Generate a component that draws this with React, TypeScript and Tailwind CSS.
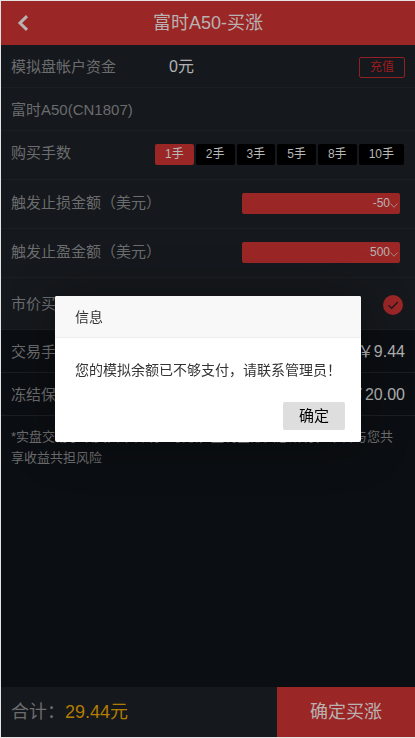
import { useState, type ReactNode } from 'react'

const LOTS = [1, 2, 3, 5, 8, 10]

function Row({ className = 'h-[43px] pt-0.5', children }: { className?: string; children: ReactNode }) {
  return (
    <div className={`flex items-center border-b border-[#1b1f23] px-2.5 ${className}`}>
      {children}
    </div>
  )
}

function AmountSelect({ id, label, options }: { id: string; label: string; options: string[] }) {
  return (
    <Row className="h-[49px] justify-between pb-0.5">
      <label htmlFor={id}>{label}</label>
      <div className="relative mr-[5px] w-[158px]">
        <select
          id={id}
          className="block h-[21px] w-full appearance-none rounded-xs bg-[#9b2626] pr-2.5 text-right text-xs text-[#b8b2b2] outline-none"
        >
          {options.map((o) => (
            <option key={o} value={o}>{o}</option>
          ))}
        </select>
        <svg viewBox="0 0 8 5" className="pointer-events-none absolute right-0.5 bottom-1.5 h-[5px] w-2" fill="none" stroke="#b08080">
          <path d="M0.5 0.5 4 4.3 7.5 0.5" />
        </svg>
      </div>
    </Row>
  )
}

export default function App() {
  const [lot, setLot] = useState(1)
  const [open, setOpen] = useState(true)

  return (
    <div
      lang="zh-CN"
      className="flex min-h-screen flex-col border-t border-b border-l border-[#e4e4e4] bg-[#0b0e12] font-['Liberation_Sans','Noto_Sans_CJK_SC',sans-serif] text-[15px] text-[#6b6c6e]"
    >
      <header className="relative flex h-11 items-center justify-center bg-[#9b2626] text-lg text-[#b8b2b2]">
        <button type="button" aria-label="返回" className="absolute top-3.5 left-4">
          <svg viewBox="0 0 12 16" className="h-4 w-3" fill="none" stroke="currentColor" strokeWidth="3">
            <path d="M10 1.2 3 8l7 6.8" />
          </svg>
        </button>
        <h1>富时A50-买涨</h1>
      </header>

      <main className="grow">
        <section className="bg-[#15181c]">
          <Row>
            <span className="w-[158px]">模拟盘帐户资金</span>
            <span className="text-base text-[#b2b2b2]">0元</span>
            <button type="button" className="ml-auto h-[21px] rounded-xs border border-[#8f2024] px-2.5 text-xs text-[#9b1c1f]">
              充值
            </button>
          </Row>
          <Row>富时A50(CN1807)</Row>
          <Row className="h-[49px] justify-between pb-0.5">
            <span className="pb-0.5">购买手数</span>
            <div className="mr-px flex gap-0.5">
              {LOTS.map((n) => (
                <button
                  key={n}
                  type="button"
                  onClick={() => setLot(n)}
                  className={`h-[21px] rounded-xs px-2.5 text-xs text-[#b8b8b8] ${n === lot ? 'bg-[#9b2626]' : 'bg-black'}`}
                >
                  {n}手
                </button>
              ))}
            </div>
          </Row>
          <AmountSelect id="stop-loss" label="触发止损金额（美元）" options={['-50', '-100', '-200']} />
          <AmountSelect id="take-profit" label="触发止盈金额（美元）" options={['500', '1000', '2000']} />
          <Row className="h-[52px] justify-between pt-0.5">
            <label htmlFor="market">市价买入</label>
            <div className="relative mr-0.5 size-5">
              <input id="market" type="checkbox" defaultChecked className="block size-5 appearance-none rounded-full bg-[#9b2626]" />
              <svg viewBox="0 0 20 20" className="pointer-events-none absolute inset-0" fill="none" stroke="#24161a" strokeWidth="1.3">
                <path d="M5.5 10.3 8.6 13.3 14.8 7" />
              </svg>
            </div>
          </Row>
        </section>

        <Row className="h-[43px] justify-between pt-0.5">
          <span>交易手续费</span>
          <span className="text-base text-[#b2b2b2]">￥9.44</span>
        </Row>
        <Row className="h-[43px] justify-between pt-0.5">
          <span>冻结保证金</span>
          <span className="text-base text-[#b2b2b2]">￥20.00</span>
        </Row>
        <p className="px-2.5 pt-2.5 text-[13px] leading-[21px]">
          *实盘交易手续费由平台统一收取，盈利全部归您所有，平台与您共享收益共担风险
        </p>
      </main>

      <footer className="flex h-[50px] bg-[#15181c] text-lg">
        <div className="flex flex-1 items-center pl-2.5">
          合计：<span className="text-[#b37d00]">29.44元</span>
        </div>
        <button type="button" className="w-1/3 bg-[#9b2626] text-[#b8b2b2]">确定买涨</button>
      </footer>

      {open && (
        <div className="fixed inset-0 flex items-center justify-center pl-px">
          <div
            role="dialog"
            aria-labelledby="dialog-title"
            className="rounded-xs bg-white text-sm text-[#333] shadow-[1px_1px_50px_rgba(0,0,0,0.3)]"
          >
            <h2 id="dialog-title" className="h-[42px] rounded-t-xs border-b border-[#eee] bg-[#f8f8f8] px-5 leading-[42px]">
              信息
            </h2>
            <p className="px-5 pt-5 pb-5 leading-6">您的模拟余额已不够支付，请联系管理员！</p>
            <div className="flex justify-end px-4 pb-3">
              <button
                type="button"
                onClick={() => setOpen(false)}
                className="h-7 rounded-xs bg-[#dedede] px-4 text-[15px] text-black"
              >
                确定
              </button>
            </div>
          </div>
        </div>
      )}
    </div>
  )
}
